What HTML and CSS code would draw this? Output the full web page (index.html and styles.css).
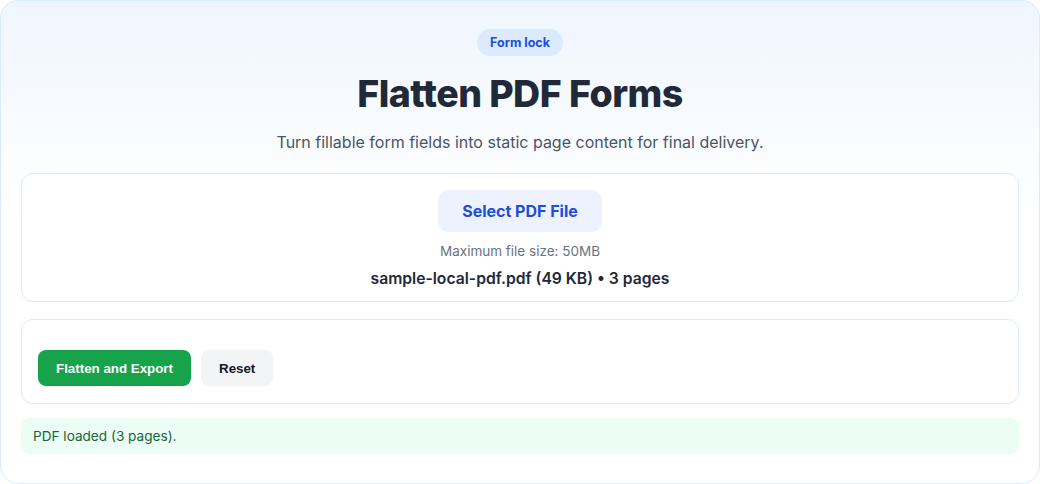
FILE: index.html
```html
<!DOCTYPE html>
<html lang="en">
<head>
  <meta charset="UTF-8">
  <meta name="viewport" content="width=device-width, initial-scale=1.0">
  <title>Flatten PDF Forms</title>
  <link rel="stylesheet" href="styles.css">
</head>
<body>
  <div class="tool">
    <div class="header">
      <span class="badge">Form lock</span>
      <h1>Flatten PDF Forms</h1>
      <p class="subtitle">Turn fillable form fields into static page content for final delivery.</p>
    </div>

    <div class="panel upload">
      <button class="select-btn">Select PDF File</button>
      <p class="hint">Maximum file size: 50MB</p>
      <p class="file-info">sample-local-pdf.pdf (49 KB) • 3 pages</p>
    </div>

    <div class="panel actions">
      <button class="btn primary">Flatten and Export</button>
      <button class="btn secondary">Reset</button>
    </div>

    <div class="status">PDF loaded (3 pages).</div>
  </div>
</body>
</html>
```

FILE: styles.css
```css
body {
  margin: 0;
  background: #ffffff;
  font-family: Inter, 'Noto Sans', sans-serif;
  color: #1f2937;
}
.tool {
  box-sizing: border-box;
  width: 1040px;
  height: 484px;
  border: 1px solid #dbeafe;
  border-radius: 18px;
  padding: 28px 20px 28px;
  background: linear-gradient(180deg, #eff6ff 0%, #ffffff 45%);
  display: flex;
  flex-direction: column;
}
.header {
  text-align: center;
}
.badge {
  display: inline-block;
  background: #dbeafe;
  color: #1d4ed8;
  font-size: 12.5px;
  font-weight: 700;
  padding: 6px 13px;
  border-radius: 999px;
  line-height: 15px;
}
h1 {
  margin: 14px 0 0;
  font-size: 37.5px;
  line-height: 48px;
  font-weight: 800;
  color: #1f2937;
  letter-spacing: -0.5px;
}
.subtitle {
  margin: 12px 0 0;
  font-size: 16px;
  line-height: 24px;
  color: #4b5563;
}
.panel {
  background: #ffffff;
  border: 1px solid #dbeafe;
  border-radius: 12px;
}
.upload {
  margin-top: 19px;
  padding: 16px 16px 11px;
  text-align: center;
}
.select-btn {
  background: #eef2ff;
  color: #1d4ed8;
  border: none;
  border-radius: 10px;
  font-family: inherit;
  font-size: 16px;
  font-weight: 700;
  padding: 0 24px;
  height: 42px;
}
.hint {
  margin: 10px 0 0;
  font-size: 13.5px;
  line-height: 18px;
  color: #6b7280;
}
.file-info {
  margin: 8px 0 0;
  font-size: 15.7px;
  line-height: 22px;
  font-weight: 600;
  color: #1f2937;
}
.actions {
  margin-top: 17px;
  padding: 30px 16px 17px;
  display: flex;
  gap: 10px;
}
.btn {
  border: none;
  border-radius: 8px;
  height: 36px;
  padding: 0 18px;
  font-family: 'Liberation Sans', Arial, sans-serif;
  font-size: 13.333px;
  font-weight: 700;
}
.primary {
  background: #16a34a;
  color: #ffffff;
}
.secondary {
  background: #f3f4f6;
  color: #111827;
}
.status {
  margin-top: 14px;
  background: #ecfdf5;
  color: #166534;
  border-radius: 8px;
  padding: 9px 12px;
  font-size: 13.6px;
  line-height: 18px;
}
```
